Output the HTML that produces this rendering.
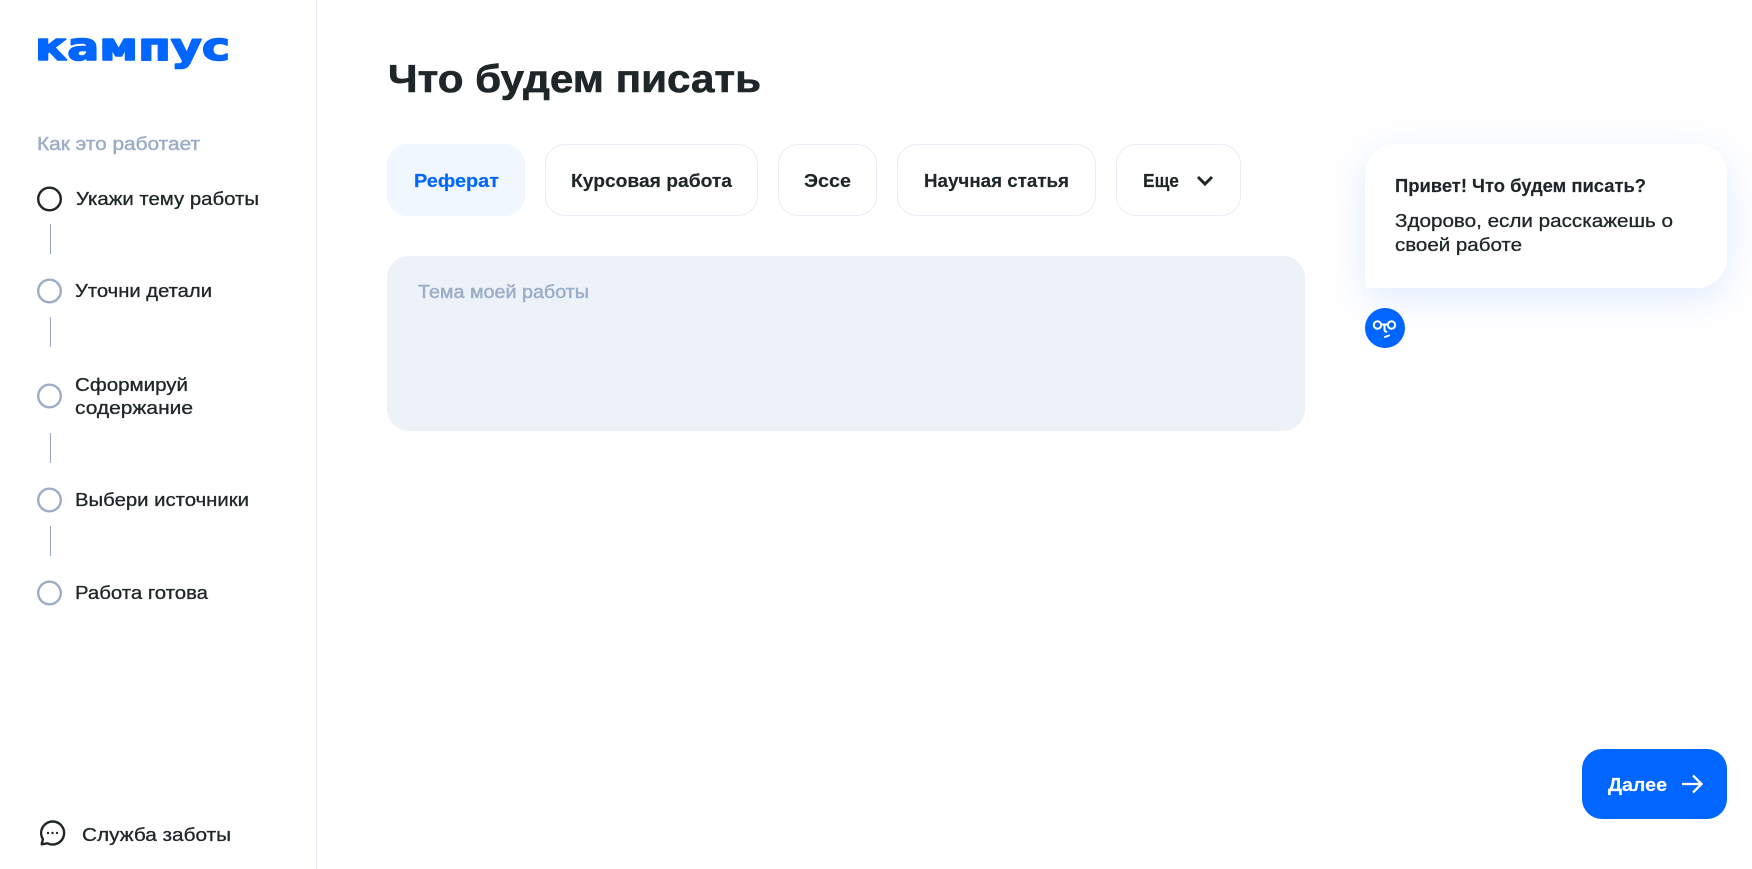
<!DOCTYPE html>
<html lang="ru"><head><meta charset="utf-8"><title>Кампус</title>
<style>
html,body{margin:0;padding:0;background:#fff;width:1752px;height:869px;overflow:hidden}
.b{position:absolute;box-sizing:border-box}
.tab{top:144px;height:72px;border:1px solid #e8edf5;border-radius:20px;background:#fff}
svg{position:absolute;left:0;top:0}
text{font-family:"Liberation Sans",sans-serif;fill:#1f2628}
.s{font-size:18px;stroke:#1f2628;stroke-width:.3px}
.t{font-size:18px;font-weight:700;stroke:#1f2628;stroke-width:.15px}
.g{font-size:18px;fill:#9badc7;stroke:#9badc7;stroke-width:.45px}
</style></head><body>
<div class="b" style="left:316px;top:0;width:1px;height:869px;background:#e8edf5"></div>
<div class="b tab" style="left:387px;width:138px;background:#f1f7fe;border-color:#f1f7fe"></div>
<div class="b tab" style="left:545px;width:213px"></div>
<div class="b tab" style="left:778px;width:99px"></div>
<div class="b tab" style="left:897px;width:199px"></div>
<div class="b tab" style="left:1116px;width:125px"></div>
<div class="b" style="left:387px;top:256px;width:918px;height:175px;background:#edf2f9;border-radius:22px"></div>
<div class="b" style="left:1365px;top:144px;width:362px;height:144px;background:#fff;border-radius:30px 30px 30px 0;box-shadow:0 10px 40px rgba(0,102,255,.13)"></div>
<div class="b" style="left:1582px;top:749px;width:145px;height:70px;background:#06f;border-radius:20px"></div>
<svg width="1752" height="869" viewBox="0 0 1752 869" xmlns="http://www.w3.org/2000/svg">
<text x="35" y="60" font-size="38" font-weight="700" textLength="195" lengthAdjust="spacingAndGlyphs" style="font-family:'DejaVu Sans',sans-serif;fill:#06f;stroke:#06f;stroke-width:1.600px;stroke-linejoin:round">кампус</text>
<text class="g" x="37" y="150" textLength="163" lengthAdjust="spacingAndGlyphs">Как это работает</text>
<g fill="none" stroke="#9badc7" stroke-width="2.400">
<circle cx="49.5" cy="291" r="11.3"/><circle cx="49.5" cy="396" r="11.3"/><circle cx="49.5" cy="500" r="11.3"/><circle cx="49.5" cy="593" r="11.3"/>
</g>
<circle cx="49.5" cy="199" r="11.3" fill="none" stroke="#1f2628" stroke-width="2.400"/>
<g stroke="#94a6c2" stroke-width="1">
<path d="M50.5 224v30M50.5 317v30M50.5 433v30M50.5 526v30"/>
</g>
<text class="s" x="76" y="205" textLength="183" lengthAdjust="spacingAndGlyphs">Укажи тему работы</text>
<text class="s" x="75" y="297" textLength="137" lengthAdjust="spacingAndGlyphs">Уточни детали</text>
<text class="s" x="75" y="391" textLength="113" lengthAdjust="spacingAndGlyphs">Сформируй</text>
<text class="s" x="75" y="414" textLength="118" lengthAdjust="spacingAndGlyphs">содержание</text>
<text class="s" x="75" y="506" textLength="174" lengthAdjust="spacingAndGlyphs">Выбери источники</text>
<text class="s" x="75" y="599" textLength="133" lengthAdjust="spacingAndGlyphs">Работа готова</text>
<path d="M52.5 821.5a11.500 11.500 0 1 1-5 21.800l-5.800 1 1.200-5.200a11.500 11.500 0 0 1 9.600-17.600z" fill="none" stroke="#1f2628" stroke-width="2.400" stroke-linejoin="round"/>
<circle cx="48" cy="833" r="1.200" fill="#1f2628"/><circle cx="52.5" cy="833" r="1.200" fill="#1f2628"/><circle cx="57" cy="833" r="1.200" fill="#1f2628"/>
<text class="s" x="82" y="841" textLength="149" lengthAdjust="spacingAndGlyphs">Служба заботы</text>
<text x="388" y="92" font-size="39" font-weight="700" textLength="373" lengthAdjust="spacingAndGlyphs" style="stroke:#1f2628;stroke-width:.6px">Что будем писать</text>
<text class="t" x="414" y="187" textLength="85" lengthAdjust="spacingAndGlyphs" style="fill:#06f;stroke:#06f">Реферат</text>
<text class="t" x="571" y="187" textLength="161" lengthAdjust="spacingAndGlyphs">Курсовая работа</text>
<text class="t" x="804" y="187" textLength="47" lengthAdjust="spacingAndGlyphs">Эссе</text>
<text class="t" x="924" y="187" textLength="145" lengthAdjust="spacingAndGlyphs">Научная статья</text>
<text class="t" x="1143" y="187" textLength="36" lengthAdjust="spacingAndGlyphs">Еще</text>
<path d="M1198 177l7 7 7-7" fill="none" stroke="#1f2628" stroke-width="3"/>
<text class="g" x="418" y="298" textLength="171" lengthAdjust="spacingAndGlyphs">Тема моей работы</text>
<text class="t" x="1395" y="192" textLength="251" lengthAdjust="spacingAndGlyphs">Привет! Что будем писать?</text>
<text class="s" x="1395" y="227" textLength="278" lengthAdjust="spacingAndGlyphs">Здорово, если расскажешь о</text>
<text class="s" x="1395" y="251" textLength="127" lengthAdjust="spacingAndGlyphs">своей работе</text>
<circle cx="1385" cy="328" r="20" fill="#06f"/>
<g fill="none" stroke="#fff" stroke-width="2">
<circle cx="1377.500" cy="325" r="3.700"/><circle cx="1391.500" cy="325" r="3.700"/>
<path d="M1381 324.500h7M1384.500 325v4.500q0 2 2 2.200M1385 337l4-1.500" stroke-linecap="round"/>
</g>
<text class="t" x="1608" y="791" textLength="59" lengthAdjust="spacingAndGlyphs" style="fill:#fff;stroke:#fff">Далее</text>
<path d="M1682 784h19M1693 775.500l8.500 8.500-8.500 8.500" fill="none" stroke="#fff" stroke-width="2.300"/>
</svg>
</body></html>
